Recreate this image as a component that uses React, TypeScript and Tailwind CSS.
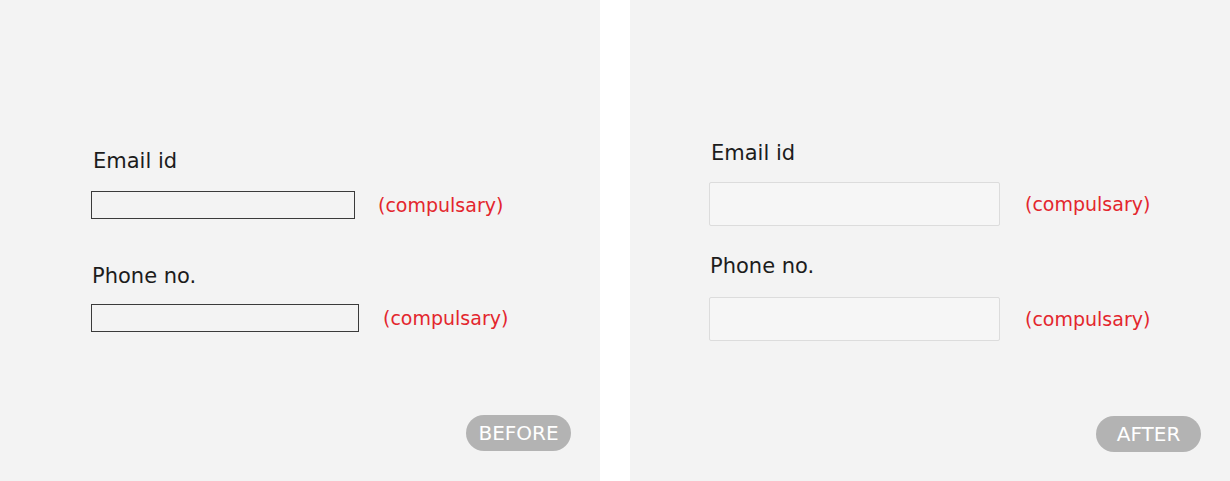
import React from 'react';

const font = { fontFamily: '"DejaVu Sans", "Open Sans", sans-serif' };

function Badge({ label }: { label: string }) {
  return (
    <div className="flex justify-end">
      <span className="flex h-[36px] w-[105px] items-center justify-center rounded-full bg-[#b3b3b3] text-[20px] text-white">
        {label}
      </span>
    </div>
  );
}

export default function App() {
  return (
    <div className="flex h-[481px] w-[1230px] bg-white" style={font}>
      {/* Before */}
      <div className="flex h-full w-[600px] flex-col bg-[#f3f3f3] pl-[91px] pr-[29px]">
        <div className="mt-[148px] pl-[2px] text-[21px] leading-[26px] text-[#1c1c1c]">Email id</div>
        <div className="mt-[17px] flex items-center gap-[23px]">
          <div className="h-[28px] w-[264px] border border-[#3a3a3a]" />
          <span className="text-[19px] leading-[22px] text-[#e3262d]">(compulsary)</span>
        </div>
        <div className="mt-[44px] pl-[1px] text-[21px] leading-[26px] text-[#1c1c1c]">Phone no.</div>
        <div className="mt-[15px] flex items-center gap-[24px]">
          <div className="h-[28px] w-[268px] border border-[#3a3a3a]" />
          <span className="text-[19px] leading-[22px] text-[#e3262d]">(compulsary)</span>
        </div>
        <div className="mt-[83px]">
          <Badge label="BEFORE" />
        </div>
      </div>

      <div className="w-[30px]" />

      {/* After */}
      <div className="flex h-full w-[600px] flex-col bg-[#f3f3f3] pl-[79px] pr-[29px]">
        <div className="mt-[140px] pl-[2px] text-[21px] leading-[26px] text-[#1c1c1c]">Email id</div>
        <div className="mt-[16px] flex items-center gap-[25px]">
          <div className="h-[44px] w-[291px] rounded-[2px] border border-[#dcdcdc] bg-[#f6f6f6]" />
          <span className="text-[19px] leading-[22px] text-[#e3262d]">(compulsary)</span>
        </div>
        <div className="mt-[27px] pl-[1px] text-[21px] leading-[26px] text-[#1c1c1c]">Phone no.</div>
        <div className="mt-[18px] flex items-center gap-[25px]">
          <div className="h-[44px] w-[291px] rounded-[2px] border border-[#dcdcdc] bg-[#f6f6f6]" />
          <span className="text-[19px] leading-[22px] text-[#e3262d]">(compulsary)</span>
        </div>
        <div className="mt-[75px]">
          <Badge label="AFTER" />
        </div>
      </div>
    </div>
  );
}
